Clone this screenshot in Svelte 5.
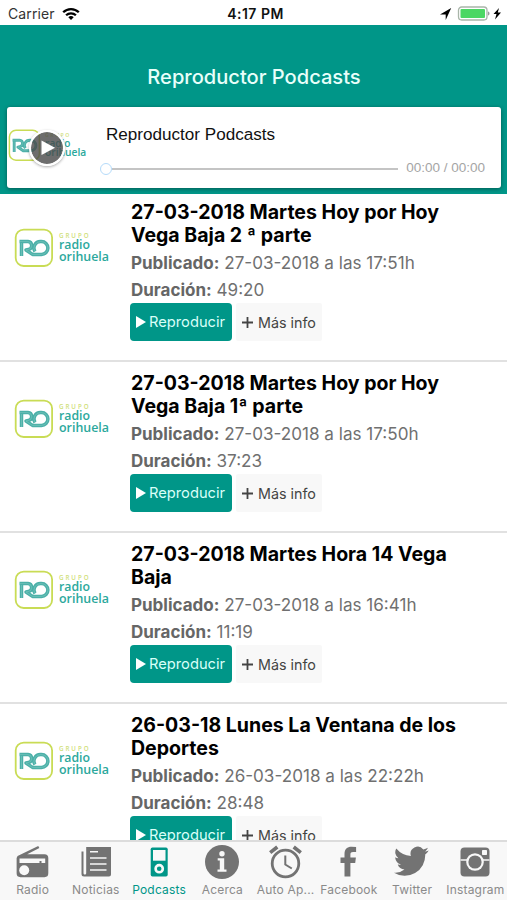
<script>
  const podcasts = [
    { lines: ['27-03-2018 Martes Hoy por Hoy', 'Vega Baja 2 ª parte'], date: '27-03-2018 a las 17:51h', duration: '49:20' },
    { lines: ['27-03-2018 Martes Hoy por Hoy', 'Vega Baja 1ª parte'], date: '27-03-2018 a las 17:50h', duration: '37:23' },
    { lines: ['27-03-2018 Martes Hora 14 Vega', 'Baja'], date: '27-03-2018 a las 16:41h', duration: '11:19' },
    { lines: ['26-03-18 Lunes La Ventana de los', 'Deportes'], date: '26-03-2018 a las 22:22h', duration: '28:48' }
  ];
  const tabs = ['Radio', 'Noticias', 'Podcasts', 'Acerca', 'Auto Ap...', 'Facebook', 'Twitter', 'Instagram'];
</script>

{#snippet logo(width)}
  <svg class="logo" {width} viewBox="0 0 96 40" aria-label="Grupo Radio Orihuela">
    <rect x="1.7" y="1.6" width="36.4" height="36.4" rx="8" fill="#fff" stroke="#c9dc55" stroke-width="1.8" />
    <g fill="none" stroke-linejoin="round">
      <path d="M7.500 28V20M5.500 13.600H14A4 4 0 0 1 14.500 21.500L12 22 18.500 26.400H27.500A6.400 6.400 0 0 0 27.500 13.600H26.500A6.400 6.400 0 0 0 21 23.500M7.500 13.600V22" stroke="#4bb0a8" stroke-width="3.500" />
      <path d="M7.500 28V15M5.500 13.600H14A4 4 0 0 1 14.500 21.500L12 22 18.500 26.400H27.500A6.400 6.400 0 0 0 27.500 13.600H26.500A6.400 6.400 0 0 0 21 23.500" stroke="#8accc5" stroke-width=".5" />
    </g>
    <text x="45" y="9.500" font-size="6.200" font-weight="600" textLength="29.500" fill="#cfe07b">GRUPO</text>
    <text x="45" y="21.300" font-size="13" font-weight="600" textLength="31" lengthAdjust="spacingAndGlyphs" fill="#2ba89c">radio</text>
    <text x="45" y="32.800" font-size="13" font-weight="600" textLength="50" lengthAdjust="spacingAndGlyphs" fill="#2ba89c">orihuela</text>
  </svg>
{/snippet}

{#snippet tabIcon(name)}
  <svg width="36" height="36" viewBox="0 0 36 36" fill="currentColor">
    {#if name === 'Radio'}
      <path d="M3 13 24.500 2.500l1.200 2.200L13 11H31a4 4 0 0 1 4 4v16a4 4 0 0 1-4 4H6a4 4 0 0 1-4-4V15z" transform="translate(-.3 -.4) scale(.96)" />
      <path d="M4.500 14.500h25.700v4.500H26.500v-2h-2v2H4.500z" fill="#f8f8f8" />
      <circle cx="9.200" cy="26.300" r="5" fill="#f8f8f8" />
    {:else if name === 'Noticias'}
      <path d="M8.200 3H33v27.500a2 2 0 0 1-2 2H6a2.500 2.500 0 0 1-2.500-2.500V7.500h2V29c0 2 2.700 2 2.700 0z" />
      <path d="M6.400 7.500h1V30h-1z" fill="#f8f8f8" />
      <path d="M12 7.800h8M12 14h16.500M12 20h16.500M12 26h16.500" stroke="#f8f8f8" stroke-width="1.500" />
    {:else if name === 'Podcasts'}
      <rect x="9.700" y="3.500" width="17" height="29" rx="1.700" />
      <path d="M12 6h12.500v10.700H12z" fill="#f8f8f8" />
      <circle cx="18.200" cy="24.700" r="3.600" fill="none" stroke="#f8f8f8" stroke-width="2.600" />
    {:else if name === 'Acerca'}
      <circle cx="18" cy="18" r="17" />
      <circle cx="18" cy="9.700" r="2.700" fill="#f8f8f8" />
      <path d="M13.700 14.200h6.500v11.300h2.300v2.200h-9v-2.200h2.300v-9h-2.100z" fill="#f8f8f8" />
    {:else if name === 'Auto Ap...'}
      <g fill="none" stroke="currentColor">
        <circle cx="17.500" cy="19.500" r="13.300" stroke-width="2.800" />
        <path d="M17.300 11.500v9l6.500 4" stroke-width="2" />
        <path d="M2.200 8.700 9.300 3M25.700 3l7.100 5.700" stroke-width="3.600" />
      </g>
    {:else if name === 'Facebook'}
      <path d="M13.500 32.500V19h-4v-5.500h4V10c0-5 2.700-7.300 7-7.300l4.600.3v5h-3c-2.300 0-2.700 1-2.700 2.600v2.900h5.500l-.7 5.500h-4.800v13.500z" />
    {:else if name === 'Twitter'}
      <path transform="translate(-.2 -.7) scale(1.46)" d="M23.900 4.900c-.9.400-1.800.700-2.800.8 1-.6 1.800-1.600 2.200-2.700-.9.600-2 1-3.100 1.200A4.900 4.900 0 0 0 11.700 8.700 14 14 0 0 1 1.700 3.600a4.900 4.900 0 0 0 1.500 6.600c-.8 0-1.600-.2-2.200-.6 0 2.300 1.600 4.400 3.900 4.900-.7.200-1.500.2-2.200.1.600 2 2.400 3.400 4.600 3.400A9.900 9.900 0 0 1 0 20.100a14 14 0 0 0 21.500-12.500c1-.7 1.800-1.600 2.400-2.700z" />
    {:else}
      <rect x="3.500" y="3.500" width="29" height="29" rx="4" />
      <rect x="25" y="6" width="5" height="5" rx=".7" fill="#f8f8f8" />
      <path d="M3.500 16h7M25.500 16h7" stroke="#f8f8f8" stroke-width="1.600" />
      <circle cx="18" cy="18" r="8.800" fill="#f8f8f8" />
      <circle cx="18" cy="18" r="6.600" />
    {/if}
  </svg>
{/snippet}

<div class="app">
  <div class="status">
    <div class="carrier">
      <span>Carrier</span>
      <svg width="18" height="14" viewBox="0 0 18 14" fill="none" stroke="#000" stroke-width="2.300">
        <path d="M1.200 5.300a11 11 0 0 1 15.600 0M4.100 8.300a7 7 0 0 1 9.800 0" />
        <path d="M6.300 10.300a4 4 0 0 1 5.400 0L9 13z" fill="#000" stroke="none" />
      </svg>
    </div>
    <strong>4:17 PM</strong>
    <div class="power">
      <svg width="66" height="18" viewBox="0 0 66 18">
        <path d="M12.200 3 6.700 15V9.500H1z" />
        <rect x="19.500" y="2" width="28.500" height="13" rx="3.200" fill="#fff" stroke="#a9b5a9" stroke-width="1.300" />
        <rect x="21.500" y="4" width="24.500" height="9" rx="1" fill="#4bd763" />
        <path d="M49 6.500c2 .3 2 3.700 0 4z" fill="#999" />
        <path d="m60 3-5.500 6h3L56 14.500l6-7h-3.200z" />
      </svg>
    </div>
  </div>

  <header>
    <h1><span>Reproductor Podcasts</span></h1>
    <section class="player">
      <div class="cover">
        {@render logo(79)}
        <button class="play" aria-label="Reproducir">
          <svg width="32" height="32" viewBox="0 0 32 32"><path d="M10.500 8.500 24 15.800 10.500 23z" fill="#fff" /></svg>
        </button>
      </div>
      <div class="track">
        <div class="name"><span>Reproductor Podcasts</span></div>
        <div class="progress">
          <i class="knob"></i><i class="rail"></i><span class="time">00:00 / 00:00</span>
        </div>
      </div>
    </section>
  </header>

  <main>
    {#each podcasts as podcast}
      <article>
        <div class="thumb">{@render logo(96)}</div>
        <div class="info">
          <h2>{#each podcast.lines as line}<span>{line}</span>{/each}</h2>
          <p><b>Publicado:</b> <span>{podcast.date}</span></p>
          <p><b>Duración:</b> <span>{podcast.duration}</span></p>
          <div class="actions">
            <button class="primary">
              <svg width="10" height="12" viewBox="0 0 10 12"><path d="M0 0 10 6 0 12z" fill="#fff" /></svg>
              <span>Reproducir</span>
            </button>
            <button class="more">
              <svg width="11" height="11" viewBox="0 0 11 11"><path d="M0 5.500h11M5.500 0v11" stroke="#444" stroke-width="1.800" /></svg>
              <span>Más info</span>
            </button>
          </div>
        </div>
      </article>
    {/each}
  </main>

  <nav>
    {#each tabs as tab}
      <div class="tab" class:active={tab === 'Podcasts'}>
        {@render tabIcon(tab)}
        <span>{tab}</span>
      </div>
    {/each}
  </nav>
</div>

<style>
  .app {
    width: 507px;
    height: 900px;
    display: flex;
    flex-direction: column;
    overflow: hidden;
    background: #fff;
    font-family: Inter, 'Liberation Sans', sans-serif;
  }
  button { border: 0; font-family: inherit; }
  svg { display: block; flex: none; }
  .status {
    height: 25px;
    flex: none;
    display: grid;
    grid-template-columns: 1fr auto 1fr;
    align-items: center;
    padding: 2px 2px 0 8px;
    box-sizing: border-box;
    font-size: 14px;
    color: #111;
  }
  .status strong { font-weight: 600; font-size: 14px; padding-right: 2px; letter-spacing: .5px; }
  .carrier { display: flex; align-items: center; gap: 7px; }
  .carrier span { color: #333; letter-spacing: .1px; }
  .power { display: flex; justify-content: flex-end; }
  header {
    height: 169px;
    flex: none;
    box-sizing: border-box;
    padding: 0 6px 0 7px;
    background: #009688;
  }
  h1 {
    margin: 0;
    height: 82px;
    padding-top: 22px;
    box-sizing: border-box;
    line-height: 60px;
    text-align: center;
    color: #e8fffa;
    font-size: 20.100px;
    font-weight: 500;
  }
  .player {
    height: 81px;
    display: flex;
    background: #fff;
    border-radius: 3px;
    box-shadow: 0 1px 4px #0006;
  }
  .cover { width: 99px; position: relative; display: flex; align-items: center; box-sizing: border-box; padding: 0 0 4px 1px; }
  .play {
    position: absolute;
    left: 22px;
    top: 23px;
    width: 36px;
    height: 36px;
    padding: 0;
    border: 2px solid #fff;
    border-radius: 50%;
    background: #484848cc;
    background-clip: padding-box;
    box-shadow: 0 1px 3px #0005;
  }
  .track { flex: 1; padding: 18px 16px 0 0; }
  .name { font: 17.100px/20px 'Liberation Sans', sans-serif; color: #111; }
  .progress { display: flex; align-items: center; height: 16px; margin: 16px 0 0 -6px; }
  .knob { width: 12px; height: 12px; box-sizing: border-box; border: 1.500px solid #b5dbfa; border-radius: 50%; background: #fff; }
  .rail { flex: 1; height: 2px; background: #c4c4c4; }
  .time { margin: -3px 0 0 8px; font: 13.500px/16px 'Liberation Sans', sans-serif; color: #a5a5a5; }
  main { flex: 1; min-height: 0; overflow: hidden; }
  article {
    height: 171px;
    box-sizing: border-box;
    display: flex;
    border-bottom: 2px solid #e1e1e1;
  }
  article:first-child { height: 168px; }
  article:first-child .thumb { padding-top: 34px; }
  article:first-child .info { padding-top: 7px; }
  .thumb { width: 131px; padding: 37px 0 0 14px; box-sizing: border-box; }
  .logo { overflow: visible; font-family: 'Open Sans', 'Noto Sans', sans-serif; }
  .info { padding-top: 10px; }
  h2 { margin: 0; font-size: 19.550px; line-height: 23px; font-weight: 700; color: #000; white-space: nowrap; }
  h2 span { display: block; width: max-content; }
  p { margin: 0; height: 27px; line-height: 27px; font-size: 17.100px; color: #707070; white-space: nowrap; }
  p b { color: #666; font-weight: 700; font-size: 17px; }
  h2 + p { margin-top: 2px; }
  .actions { display: flex; gap: 4px; margin-left: -1px; }
  .actions button { height: 38px; display: flex; align-items: center; border-radius: 4px; padding: 0 0 0 6px; gap: 3px; font-size: 14.700px; white-space: nowrap; }
  .actions .primary { width: 102px; background: #009688; color: #d9fff8; }
  .actions .more { width: 86px; background: #f8f8f8; color: #444; gap: 5px; border-radius: 2px; font-size: 14.300px; }
  nav {
    height: 60px;
    flex: none;
    box-sizing: border-box;
    border-top: 2px solid #dcdcdc;
    background: #f8f8f8;
    display: grid;
    grid-template-columns: repeat(8, 63.250px);
    padding-left: 1px;
    z-index: 1;
  }
  .tab { display: flex; flex-direction: column; align-items: center; padding-top: 2px; color: #737373; }
  .tab span { margin-top: 1px; line-height: 17px; font-size: 12px; color: #8a8a8a; letter-spacing: .2px; white-space: nowrap; }
  .tab.active, .tab.active span { color: #009688; }
</style>
